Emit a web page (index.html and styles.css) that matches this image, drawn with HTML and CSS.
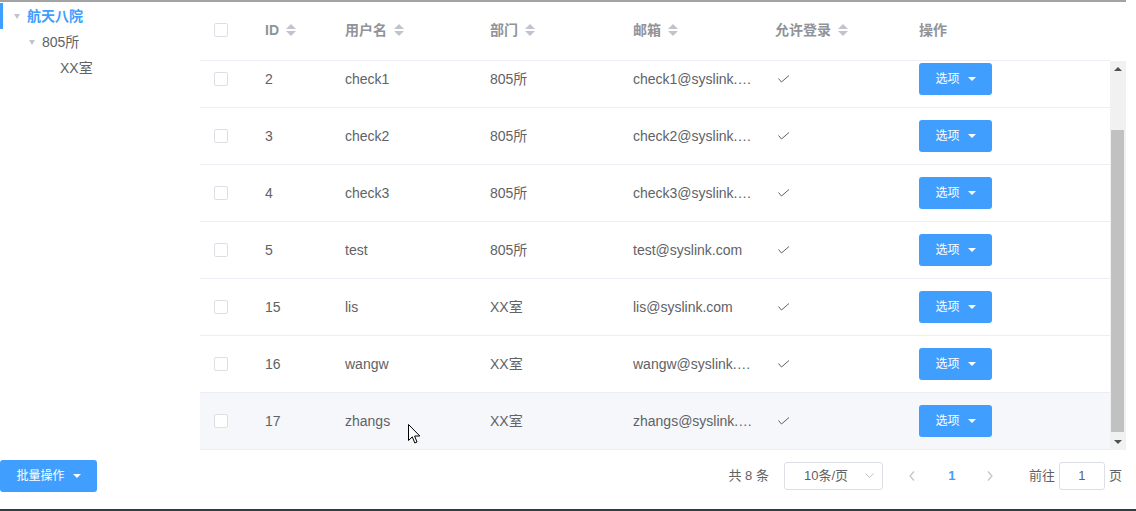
FILE: index.html
```html
<!DOCTYPE html>
<html lang="zh">
<head>
<meta charset="utf-8">
<title>用户管理</title>
<link rel="stylesheet" href="styles.css">
</head>
<body>
<div class="page">
  <div class="main">
    <aside class="tree">
      <div class="node lvl1 current"><span class="tcaret"></span><span class="label">航天八院</span></div>
      <div class="node lvl2"><span class="tcaret"></span><span class="label">805所</span></div>
      <div class="node lvl3"><span class="label">XX室</span></div>
    </aside>
    <section class="table">
      <div class="thead grid">
        <div class="cell c-sel"><span class="checkbox"></span></div>
        <div class="cell">ID<span class="sort"><i class="up"></i><i class="down"></i></span></div>
        <div class="cell">用户名<span class="sort"><i class="up"></i><i class="down"></i></span></div>
        <div class="cell">部门<span class="sort"><i class="up"></i><i class="down"></i></span></div>
        <div class="cell">邮箱<span class="sort"><i class="up"></i><i class="down"></i></span></div>
        <div class="cell">允许登录<span class="sort"><i class="up"></i><i class="down"></i></span></div>
        <div class="cell">操作</div>
      </div>
      <div class="tbody-wrap">
        <div class="tbody">
          <div class="rows">
            <div class="row grid">
              <div class="cell c-sel"><span class="checkbox"></span></div>
              <div class="cell">2</div><div class="cell">check1</div><div class="cell">805所</div>
              <div class="cell"><span class="ellipsis">check1@syslink.com</span></div>
              <div class="cell"><svg class="check" width="12" height="9" viewBox="0 0 12 9"><polyline points="0.5,3.5 3.5,7 11,0.5" fill="none" stroke="#606266" stroke-width="1"/></svg></div>
              <div class="cell"><span class="btn">选项<i class="bcaret"></i></span></div>
            </div>
            <div class="row grid">
              <div class="cell c-sel"><span class="checkbox"></span></div>
              <div class="cell">3</div><div class="cell">check2</div><div class="cell">805所</div>
              <div class="cell"><span class="ellipsis">check2@syslink.com</span></div>
              <div class="cell"><svg class="check" width="12" height="9" viewBox="0 0 12 9"><polyline points="0.5,3.5 3.5,7 11,0.5" fill="none" stroke="#606266" stroke-width="1"/></svg></div>
              <div class="cell"><span class="btn">选项<i class="bcaret"></i></span></div>
            </div>
            <div class="row grid">
              <div class="cell c-sel"><span class="checkbox"></span></div>
              <div class="cell">4</div><div class="cell">check3</div><div class="cell">805所</div>
              <div class="cell"><span class="ellipsis">check3@syslink.com</span></div>
              <div class="cell"><svg class="check" width="12" height="9" viewBox="0 0 12 9"><polyline points="0.5,3.5 3.5,7 11,0.5" fill="none" stroke="#606266" stroke-width="1"/></svg></div>
              <div class="cell"><span class="btn">选项<i class="bcaret"></i></span></div>
            </div>
            <div class="row grid">
              <div class="cell c-sel"><span class="checkbox"></span></div>
              <div class="cell">5</div><div class="cell">test</div><div class="cell">805所</div>
              <div class="cell"><span class="ellipsis">test@syslink.com</span></div>
              <div class="cell"><svg class="check" width="12" height="9" viewBox="0 0 12 9"><polyline points="0.5,3.5 3.5,7 11,0.5" fill="none" stroke="#606266" stroke-width="1"/></svg></div>
              <div class="cell"><span class="btn">选项<i class="bcaret"></i></span></div>
            </div>
            <div class="row grid">
              <div class="cell c-sel"><span class="checkbox"></span></div>
              <div class="cell">15</div><div class="cell">lis</div><div class="cell">XX室</div>
              <div class="cell"><span class="ellipsis">lis@syslink.com</span></div>
              <div class="cell"><svg class="check" width="12" height="9" viewBox="0 0 12 9"><polyline points="0.5,3.5 3.5,7 11,0.5" fill="none" stroke="#606266" stroke-width="1"/></svg></div>
              <div class="cell"><span class="btn">选项<i class="bcaret"></i></span></div>
            </div>
            <div class="row grid">
              <div class="cell c-sel"><span class="checkbox"></span></div>
              <div class="cell">16</div><div class="cell">wangw</div><div class="cell">XX室</div>
              <div class="cell"><span class="ellipsis">wangw@syslink.com</span></div>
              <div class="cell"><svg class="check" width="12" height="9" viewBox="0 0 12 9"><polyline points="0.5,3.5 3.5,7 11,0.5" fill="none" stroke="#606266" stroke-width="1"/></svg></div>
              <div class="cell"><span class="btn">选项<i class="bcaret"></i></span></div>
            </div>
            <div class="row grid hover">
              <div class="cell c-sel"><span class="checkbox"></span></div>
              <div class="cell">17</div><div class="cell">zhangs</div><div class="cell">XX室</div>
              <div class="cell"><span class="ellipsis">zhangs@syslink.com</span></div>
              <div class="cell"><svg class="check" width="12" height="9" viewBox="0 0 12 9"><polyline points="0.5,3.5 3.5,7 11,0.5" fill="none" stroke="#606266" stroke-width="1"/></svg></div>
              <div class="cell"><span class="btn">选项<i class="bcaret"></i></span></div>
            </div>
          </div>
        </div>
        <div class="scrollbar">
          <div class="sb-btn"><i class="sb-up"></i></div>
          <div class="sb-track"><div class="sb-thumb"></div></div>
          <div class="sb-btn"><i class="sb-down"></i></div>
        </div>
      </div>
    </section>
  </div>
  <div class="footer">
    <span class="btn batch">批量操作<i class="bcaret"></i></span>
    <div class="pager">
      <span class="total">共 8 条</span>
      <span class="select">10条/页<svg class="chev" width="9" height="6" viewBox="0 0 9 6"><polyline points="0.5,0.5 4.5,4.5 8.5,0.5" fill="none" stroke="#c0c4cc" stroke-width="1"/></svg></span>
      <span class="pbtn prev"><svg width="6" height="10" viewBox="0 0 6 10"><polyline points="5,0.5 1,5 5,9.5" fill="none" stroke="#c0c4cc" stroke-width="1.2"/></svg></span>
      <span class="pbtn num">1</span>
      <span class="pbtn next"><svg width="6" height="10" viewBox="0 0 6 10"><polyline points="1,0.5 5,5 1,9.5" fill="none" stroke="#c0c4cc" stroke-width="1.2"/></svg></span>
      <span class="jump">前往<span class="jinput">1</span>页</span>
    </div>
  </div>
</div>
<div class="taskbar"></div>
<svg class="cursor" width="13" height="21" viewBox="0 0 13 21"><path d="M0.5,0.5 L0.5,16.5 L4.3,12.8 L6.8,19 L9,18 L6.6,12 L11.8,12 Z" fill="#fff" stroke="#000" stroke-width="1" stroke-linejoin="round"/></svg>
</body>
</html>
```

FILE: styles.css
```css
* { box-sizing: border-box; }
html, body { margin: 0; padding: 0; }
body {
  width: 1136px;
  height: 511px;
  overflow: hidden;
  background: #fff;
  font-family: "Liberation Sans", "Noto Sans CJK SC", Arial, sans-serif;
  font-size: 14px;
  line-height: 16px;
  color: #606266;
  position: relative;
}
.page {
  width: 1126px;
  border-top: 2px solid #a3a3a3;
}
.main {
  display: flex;
  height: 448px;
}
/* tree */
.tree {
  width: 200px;
  flex: none;
  padding-top: 1px;
}
.node {
  height: 26px;
  display: flex;
  align-items: center;
  font-size: 14px;
  color: #606266;
}
.node.current {
  box-shadow: inset 3px 0 0 #409eff;
  color: #409eff;
  font-weight: bold;
}
.lvl1 { padding-left: 9px; }
.lvl2 { padding-left: 24px; }
.lvl3 { padding-left: 60px; }
.tcaret {
  width: 18px;
  height: 26px;
  display: flex;
  align-items: center;
  justify-content: center;
}
.tcaret::before {
  content: "";
  border-left: 3.5px solid transparent;
  border-right: 3.5px solid transparent;
  border-top: 5px solid #c0c4cc;
  margin-left: -2px;
}
/* table */
.table {
  width: 926px;
  flex: none;
}
.grid {
  display: grid;
  grid-template-columns: 55px 80px 145px 143px 142px 144px 201px;
  width: 910px;
}
.cell {
  display: flex;
  align-items: center;
  padding: 0 10px;
  min-width: 0;
  white-space: nowrap;
}
.cell.c-sel { padding-left: 14px; }
.thead {
  height: 59px;
  padding-bottom: 2px;
  border-bottom: 1px solid #ebeef5;
  color: #909399;
  font-weight: bold;
}
.checkbox {
  width: 14px;
  height: 14px;
  border: 1px solid #dcdfe6;
  border-radius: 2px;
  background: #fff;
}
.sort {
  width: 24px;
  height: 14px;
  display: inline-flex;
  flex-direction: column;
  align-items: center;
  justify-content: center;
  gap: 2px;
}
.sort .up {
  border-left: 5px solid transparent;
  border-right: 5px solid transparent;
  border-bottom: 5px solid #c0c4cc;
}
.sort .down {
  border-left: 5px solid transparent;
  border-right: 5px solid transparent;
  border-top: 5px solid #c0c4cc;
}
.tbody-wrap {
  display: flex;
  height: 389px;
}
.tbody {
  width: 910px;
  overflow: hidden;
}
.rows { margin-top: -10px; }
.row {
  height: 57px;
  border-bottom: 1px solid #ebeef5;
}
.row.hover { background: #f5f7fa; }
.ellipsis {
  overflow: hidden;
  text-overflow: ellipsis;
  white-space: nowrap;
  display: block;
  max-width: 120px;
}
.check { margin-left: 3px; }
.btn {
  display: inline-flex;
  align-items: center;
  justify-content: center;
  gap: 8px;
  width: 73px;
  height: 32px;
  background: #409eff;
  color: #fff;
  border-radius: 3px;
  font-size: 12px;
}
.bcaret {
  border-left: 4px solid transparent;
  border-right: 4px solid transparent;
  border-top: 4px solid #fff;
}
/* scrollbar */
.scrollbar {
  width: 16px;
  background: #f1f1f1;
  display: flex;
  flex-direction: column;
}
.sb-btn {
  height: 16px;
  display: flex;
  align-items: center;
  justify-content: center;
  flex: none;
}
.sb-up {
  border-left: 4px solid transparent;
  border-right: 4px solid transparent;
  border-bottom: 4px solid #505050;
}
.sb-down {
  border-left: 4px solid transparent;
  border-right: 4px solid transparent;
  border-top: 4px solid #505050;
}
.sb-track { flex: 1; padding: 53px 2px 0 1px; }
.sb-thumb { height: 302px; background: #c1c1c1; }
/* footer */
.footer {
  height: 59px;
  display: flex;
  align-items: flex-start;
  padding-top: 10px;
}
.batch {
  width: 97px;
  gap: 8px;
}
.pager {
  margin-left: auto;
  margin-top: 2px;
  display: flex;
  align-items: center;
  height: 28px;
  font-size: 13px;
  color: #606266;
  padding-right: 4px;
}
.total { margin-right: 15px; }
.select {
  width: 99px;
  height: 28px;
  border: 1px solid #dcdfe6;
  border-radius: 3px;
  display: flex;
  align-items: center;
  padding-left: 19px;
  padding-right: 8px;
  justify-content: space-between;
}
.pbtn {
  width: 30px;
  height: 28px;
  display: flex;
  align-items: center;
  justify-content: center;
}
.prev { margin-left: 14px; }
.num { margin-left: 10px; color: #409eff; font-weight: bold; }
.next { margin-left: 8px; }
.jump {
  margin-left: 24px;
  display: flex;
  align-items: center;
}
.jinput {
  width: 46px;
  height: 28px;
  margin: 0 4px;
  border: 1px solid #dcdfe6;
  border-radius: 3px;
  display: flex;
  align-items: center;
  justify-content: center;
}
.taskbar {
  height: 2px;
  background: #2f3e46;
}
.cursor {
  position: absolute;
  left: 408px;
  top: 424px;
}
```
